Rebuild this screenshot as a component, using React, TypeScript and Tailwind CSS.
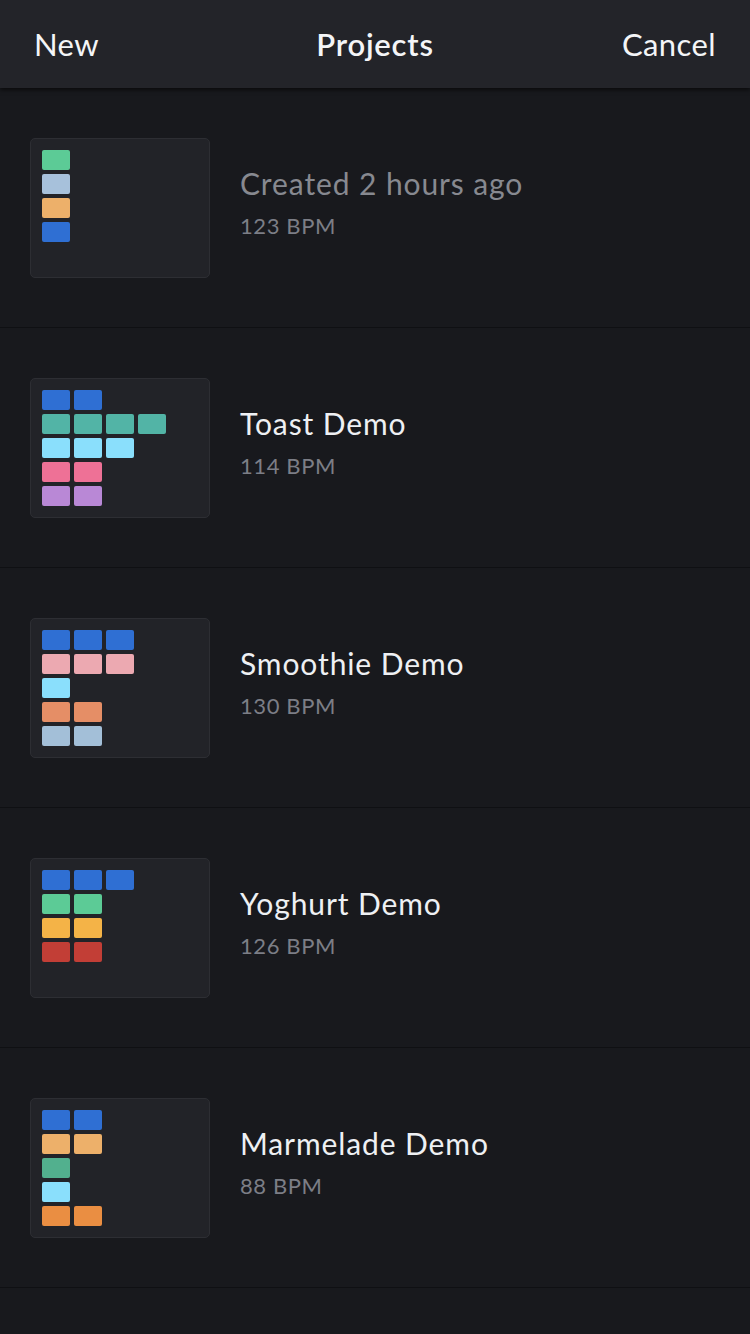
import React from 'react';

type Project = {
  title: string;
  bpm: number;
  muted?: boolean;
  rows: string[][];
};

const BLUE = 'bg-[#2f6fd3]';

const projects: Project[] = [
  {
    title: 'Created 2 hours ago',
    bpm: 123,
    muted: true,
    rows: [['bg-[#5ccb96]'], ['bg-[#a7c1db]'], ['bg-[#edb06a]'], [BLUE]],
  },
  {
    title: 'Toast Demo',
    bpm: 114,
    rows: [
      [BLUE, BLUE],
      ['bg-[#52b4a6]', 'bg-[#52b4a6]', 'bg-[#52b4a6]', 'bg-[#52b4a6]'],
      ['bg-[#8adffc]', 'bg-[#8adffc]', 'bg-[#8adffc]'],
      ['bg-[#ee7196]', 'bg-[#ee7196]'],
      ['bg-[#b988d6]', 'bg-[#b988d6]'],
    ],
  },
  {
    title: 'Smoothie Demo',
    bpm: 130,
    rows: [
      [BLUE, BLUE, BLUE],
      ['bg-[#eca9b1]', 'bg-[#eca9b1]', 'bg-[#eca9b1]'],
      ['bg-[#8adffc]'],
      ['bg-[#e58e66]', 'bg-[#e58e66]'],
      ['bg-[#a3bfd8]', 'bg-[#a3bfd8]'],
    ],
  },
  {
    title: 'Yoghurt Demo',
    bpm: 126,
    rows: [
      [BLUE, BLUE, BLUE],
      ['bg-[#5ccb96]', 'bg-[#5ccb96]'],
      ['bg-[#f4b347]', 'bg-[#f4b347]'],
      ['bg-[#c23e36]', 'bg-[#c23e36]'],
    ],
  },
  {
    title: 'Marmelade Demo',
    bpm: 88,
    rows: [
      [BLUE, BLUE],
      ['bg-[#edb06a]', 'bg-[#edb06a]'],
      ['bg-[#52b08e]'],
      ['bg-[#8adffc]'],
      ['bg-[#ea8e42]', 'bg-[#ea8e42]'],
    ],
  },
];

function Thumbnail({ rows }: { rows: string[][] }) {
  return (
    <div className="w-[180px] h-[140px] shrink-0 rounded-[5px] border border-[#2d2e33] bg-[#222328] p-[11px] flex flex-col gap-[4px]">
      {rows.map((row, i) => (
        <div key={i} className="flex gap-[4px]">
          {row.map((color, j) => (
            <div key={j} className={`w-[28px] h-[20px] rounded-[2px] ${color}`} />
          ))}
        </div>
      ))}
    </div>
  );
}

function ProjectRow({ project }: { project: Project }) {
  return (
    <div className="h-[240px] flex items-center px-[30px] border-b border-[#0f1013]">
      <Thumbnail rows={project.rows} />
      <div className="ml-[30px] flex flex-col pb-[12px]">
        <div
          className={`text-[30px] leading-[36px] tracking-[0.9px] ${
            project.muted ? 'text-[#878990]' : 'text-[#eef0f3]'
          }`}
        >
          {project.title}
        </div>
        <div className="mt-[12px] text-[22px] leading-[26px] tracking-[0.6px] text-[#7c7e86]">
          {project.bpm} BPM
        </div>
      </div>
    </div>
  );
}

export default function App() {
  return (
    <div className="min-h-[1334px] w-[750px] bg-[#18191d] font-['Lato','Open_Sans',sans-serif]">
      <div className="h-[88px] bg-[#232429] grid grid-cols-3 items-center px-[34px] text-[31px] leading-[38px] tracking-[0.4px] text-[#f4f5f7] shadow-[0_2px_4px_rgba(0,0,0,0.6)] relative">
        <span>New</span>
        <span className="text-center font-semibold tracking-[0.8px]">Projects</span>
        <span className="text-right">Cancel</span>
      </div>
      {projects.map((p) => (
        <ProjectRow key={p.title} project={p} />
      ))}
    </div>
  );
}
